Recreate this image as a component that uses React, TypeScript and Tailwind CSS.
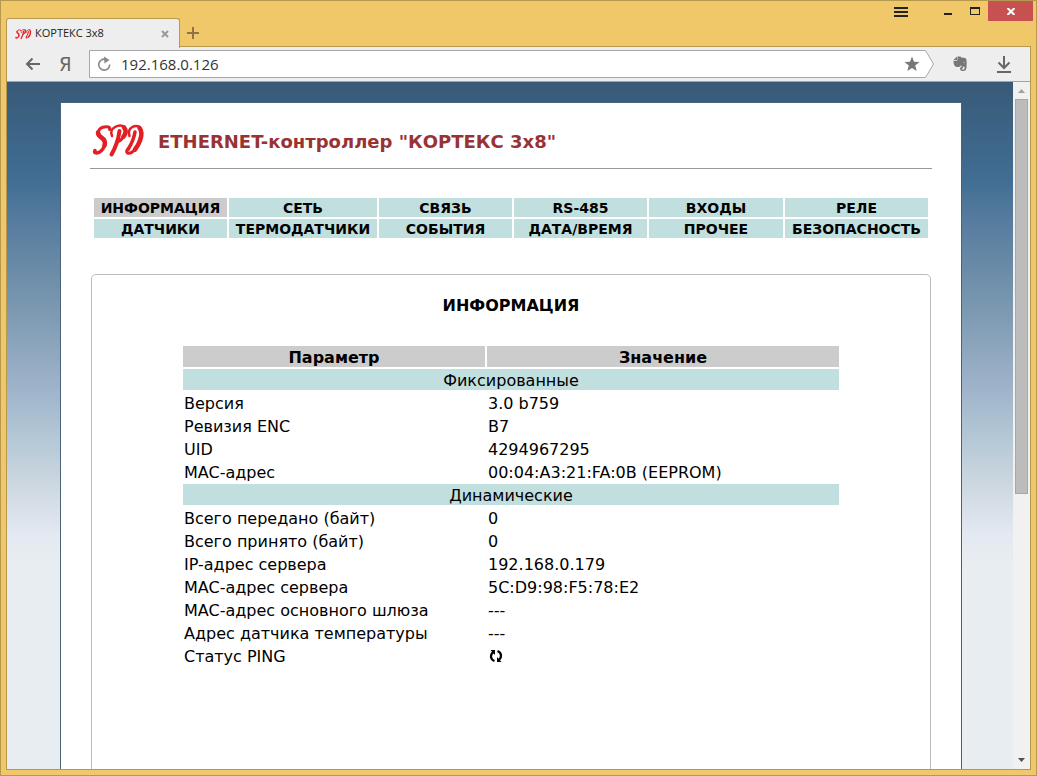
import type { ReactNode } from "react";

const menu = [
  ["ИНФОРМАЦИЯ", "СЕТЬ", "СВЯЗЬ", "RS-485", "ВХОДЫ", "РЕЛЕ"],
  ["ДАТЧИКИ", "ТЕРМОДАТЧИКИ", "СОБЫТИЯ", "ДАТА/ВРЕМЯ", "ПРОЧЕЕ", "БЕЗОПАСНОСТЬ"],
];

const fixedRows: [string, ReactNode][] = [
  ["Версия", "3.0 b759"],
  ["Ревизия ENC", "B7"],
  ["UID", "4294967295"],
  ["MAC-адрес", "00:04:A3:21:FA:0B (EEPROM)"],
];

const dynamicRows: [string, ReactNode][] = [
  ["Всего передано (байт)", "0"],
  ["Всего принято (байт)", "0"],
  ["IP-адрес сервера", "192.168.0.179"],
  ["MAC-адрес сервера", "5C:D9:98:F5:78:E2"],
  ["MAC-адрес основного шлюза", "---"],
  ["Адрес датчика температуры", "---"],
  ["Статус PING", <PingButton key="ping" />],
];

export default function App() {
  return (
    <div className="flex h-screen flex-col overflow-hidden border border-[#b6984f] bg-[#f0c869] px-[5px] pb-[5px]">
      <TitleBar />
      <div className="flex min-h-0 flex-1 flex-col border border-t-0 border-[#b6984f]">
        <Toolbar />
        <div className="flex min-h-0 flex-1">
          <div className="min-w-0 flex-1 overflow-hidden bg-[linear-gradient(#385a78,#406d92_14%,#557b9e_20%,#7896ae_32%,#9db2c9_44%,#b4c8d6_52%,#cbd6df_58%,#e4e9f2_66%,#e8edf1_70%)] pt-5 pr-[51px] pl-[53px]">
            <DevicePage />
          </div>
          <Scrollbar />
        </div>
      </div>
    </div>
  );
}

function TitleBar() {
  return (
    <header className="flex h-[46px] shrink-0">
      <div className="relative z-10 mt-[17px] -mb-px flex w-[174px] items-center rounded-t-[3px] border border-b-0 border-[#b6984f] bg-[#eeeeee] pr-2.5 pl-2">
        <SpdLogo className="h-3 w-[17px]" />
        <span className="ml-[3px] flex-1 font-['Open_Sans',sans-serif] text-[11px] text-[#222222]">
          КОРТЕКС 3x8
        </span>
        <button aria-label="Закрыть вкладку" type="button">
          <svg className="h-2 w-2" stroke="#999999" strokeWidth="2" viewBox="0 0 8 8">
            <path d="M1 1l6 6M7 1 1 7" />
          </svg>
        </button>
      </div>
      <div className="flex flex-1 justify-between border-b border-[#b6984f]">
        <button aria-label="Новая вкладка" className="mt-5 ml-[5px] h-6 w-4" type="button">
          <svg className="h-4 w-4" stroke="#8e7545" strokeWidth="2" viewBox="0 0 16 16">
            <path d="M8 2v12M2 8h12" />
          </svg>
        </button>
        <div className="-mr-0.5 flex h-5 items-start">
          <button aria-label="Меню" className="mt-1.5 mr-8 h-2.5 w-3.5" type="button">
            <svg className="h-2.5 w-3.5" fill="#222222" viewBox="0 0 14 10">
              <path d="M0 0h14v2H0zM0 4h14v2H0zM0 8h14v2H0z" />
            </svg>
          </button>
          <button aria-label="Свернуть" className="h-5 w-6" type="button">
            <svg className="h-5 w-6" fill="#222222" viewBox="0 0 24 20">
              <path d="M4 12h8v2H4z" />
            </svg>
          </button>
          <button aria-label="Развернуть" className="h-5 w-6" type="button">
            <svg className="h-5 w-6" fill="#222222" viewBox="0 0 24 20">
              <path d="M6 6h10v8H6zM7 8v5h8V8z" fillRule="evenodd" />
            </svg>
          </button>
          <button
            aria-label="Закрыть"
            className="flex h-5 w-[45px] items-center justify-center bg-[#c75050]"
            type="button"
          >
            <svg className="h-[7px] w-2" stroke="#ffffff" strokeWidth="2" viewBox="0 0 8 7">
              <path d="M.5 0l7 7M7.5 0l-7 7" />
            </svg>
          </button>
        </div>
      </div>
    </header>
  );
}

function Toolbar() {
  return (
    <div className="flex h-[35px] shrink-0 items-center border-b border-[#a2a2a2] bg-[#eeeeee] px-[18px] font-['Open_Sans',sans-serif] text-[#666666]">
      <button aria-label="Назад" type="button">
        <svg
          className="h-4 w-4"
          fill="none"
          stroke="currentColor"
          strokeWidth="2"
          viewBox="0 0 16 16"
        >
          <path d="M15 8H2M7.5 2.500 2 8l5.500 5.500" />
        </svg>
      </button>
      <button
        aria-label="Яндекс"
        className="mr-[18px] ml-[18px] w-3 font-['DejaVu_Sans_Condensed','DejaVu_Sans',sans-serif] text-xl leading-6"
        type="button"
      >
        Я
      </button>
      <form className="relative flex h-7 flex-1 items-center">
        <svg
          className="absolute inset-0 h-full w-full"
          preserveAspectRatio="none"
          viewBox="0 0 845 28"
        >
          <path
            d="M.5.5h836l8 13.500-8 13.500H.5z"
            fill="#ffffff"
            stroke="#a8a8a8"
            vectorEffect="non-scaling-stroke"
          />
        </svg>
        <button aria-label="Обновить" className="relative ml-[7px]" type="button">
          <svg
            className="h-4 w-4"
            fill="none"
            stroke="#888888"
            strokeWidth="1.600"
            viewBox="0 0 16 16"
          >
            <path d="M13.700 8.500A5.500 5.500 0 1 1 9.500 3.300" />
            <path d="M8 .5 13.500 4 8.500 7.500z" fill="#888888" stroke="none" />
          </svg>
        </button>
        <input
          aria-label="Адрес"
          className="relative ml-[9px] min-w-0 flex-1 bg-transparent text-[15px] text-[#333333] outline-none"
          defaultValue="192.168.0.126"
          type="text"
        />
        <button aria-label="В закладки" className="relative mr-[14px]" type="button">
          <svg className="h-4 w-4" fill="#777777" viewBox="0 0 16 16">
            <path d="M8 .5l2 5.300 5.500.2-4.300 3.500 1.500 5.500L8 11.900 3.300 15l1.500-5.500L.5 6 6 5.800z" />
          </svg>
        </button>
      </form>
      <button aria-label="Evernote" className="ml-[18px]" type="button">
        <svg className="h-4 w-4" fill="#777777" viewBox="0 0 16 16">
          <path d="M1.500 4 5 .5V4z" />
          <path d="M5.500.5H8q1 0 1.300 1l3.700.5q1.200.2 1.400 1.500.6 3.500.1 8-.4 3.500-3 3.500h-1q-2.500 0-2.500-2.300Q8 10.500 10.500 10.500h.5v1.700q-1.300-.1-1.300.7 0 .7 1 .7h.8q.9 0 1-1.200l.1-1.700-2.900-.3-.7-1.200q-.5 1.700-2.500 1.700H4.500Q2.300 10.700 1.700 7.300L1.400 4.800h3q1.100 0 1.100-1z" />
          <path d="M11 6.700q1.200-1.100 2 .3z" fill="#eeeeee" />
        </svg>
      </button>
      <button aria-label="Загрузки" className="ml-7" type="button">
        <svg
          className="h-[18px] w-4"
          fill="none"
          stroke="currentColor"
          strokeWidth="2"
          viewBox="0 0 16 18"
        >
          <path d="M8 1v12M2.500 7.500 8 13l5.500-5.500M1 17h14" />
        </svg>
      </button>
    </div>
  );
}

function DevicePage() {
  return (
    <main className="h-full border border-b-0 border-[#4a617a] bg-white px-[29px] font-['DejaVu_Sans',Verdana,sans-serif] text-black">
      <div className="flex h-[66px] items-end gap-3 border-b border-[#999999]">
        <SpdLogo className="mb-2.5 ml-0.5 h-9 w-[54px]" />
        <h1 className="mb-3 text-lg font-bold text-[#993333]">
          ETHERNET-контроллер &quot;КОРТЕКС 3x8&quot;
        </h1>
      </div>

      <nav className="mt-[27px] px-0.5">
        <table className="w-full table-fixed border-separate border-spacing-0.5 text-center text-sm leading-[18px] font-bold">
          <colgroup>
            <col className="w-[133px]" />
            <col className="w-[148px]" />
            <col className="w-[133px]" />
            <col className="w-[133px]" />
            <col className="w-[134px]" />
            <col />
          </colgroup>
          <tbody>
            {menu.map((row) => (
              <tr key={row[0]}>
                {row.map((item) => (
                  <td
                    className={
                      item === "ИНФОРМАЦИЯ" ? "bg-[#cccccc] p-0" : "bg-[#c0dfde] p-0"
                    }
                    key={item}
                  >
                    <a className="block pt-px" href="#">
                      {item}
                    </a>
                  </td>
                ))}
              </tr>
            ))}
          </tbody>
        </table>
      </nav>

      <section className="mx-px mt-[34px] min-h-[600px] rounded-[5px] border border-[#bbbbbb] px-[89px] pt-[21px]">
        <h2 className="text-center text-base leading-5 font-bold">ИНФОРМАЦИЯ</h2>
        <table className="mt-7 w-full table-fixed border-separate border-spacing-0.5 text-base leading-[19px]">
          <colgroup>
            <col className="w-[302px]" />
            <col />
          </colgroup>
          <thead>
            <tr className="bg-[#cccccc]">
              <th className="px-px pt-0.5 pb-0">Параметр</th>
              <th className="px-px pt-0.5 pb-0">Значение</th>
            </tr>
          </thead>
          <tbody>
            <GroupRow title="Фиксированные" />
            {fixedRows.map(([name, value]) => (
              <ValueRow key={name} name={name} value={value} />
            ))}
            <GroupRow title="Динамические" />
            {dynamicRows.map(([name, value]) => (
              <ValueRow key={name} name={name} value={value} />
            ))}
          </tbody>
        </table>
      </section>
    </main>
  );
}

function GroupRow({ title }: { title: string }) {
  return (
    <tr>
      <td className="bg-[#c0dfde] px-px pt-0.5 pb-0 text-center" colSpan={2}>
        {title}
      </td>
    </tr>
  );
}

function ValueRow({ name, value }: { name: string; value: ReactNode }) {
  return (
    <tr>
      <td className="px-px pt-0.5 pb-0">{name}</td>
      <td className="px-px pt-0.5 pb-0">{value}</td>
    </tr>
  );
}

function PingButton() {
  return (
    <button aria-label="Обновить PING" className="block h-[19px] w-4" type="button">
      <svg className="h-4 w-4" fill="none" stroke="#000000" strokeWidth="2.200" viewBox="0 0 16 16">
        <path d="M6.500 12Q3 10.500 3 7.500T5.500 3M9.500 2Q13 3.500 13 6.500T10.500 11" />
        <path d="M2.500 1H7v5zM13.500 13H9V8z" fill="#000000" stroke="none" />
      </svg>
    </button>
  );
}

function Scrollbar() {
  return (
    <div className="flex w-[17px] shrink-0 flex-col items-center bg-[#f1f1f1]">
      <svg className="h-[17px] w-[17px]" fill="#a0a0a0" viewBox="0 0 17 17">
        <path d="M8.500 7 12 11H5z" />
      </svg>
      <div className="h-[395px] w-[13px] border border-[#a8a8a8] bg-[#bcbcbc]" />
      <svg className="mt-auto h-[17px] w-[17px]" fill="#505050" viewBox="0 0 17 17">
        <path d="M5 6h7l-3.500 4z" />
      </svg>
    </div>
  );
}

// Brush-script emblem, also used as the tab icon
function SpdLogo({ className }: { className: string }) {
  return (
    <svg
      className={className}
      fill="none"
      stroke="#e31e24"
      strokeLinecap="round"
      strokeLinejoin="round"
      viewBox="0 0 54 36"
    >
      <path d="M17.500 7.500Q19 4.500 14 4.700 7 5 6 10.500" strokeWidth="3" />
      <path d="M6 10.500q0 3 4 5.500t2.500 7.500" strokeWidth="4.500" />
      <path d="M12.500 23.500Q10 30.500 4.500 31 1.500 31 3 28.500" strokeWidth="3.500" />
      <path d="M27.500 9Q26 21 19.500 32.500" strokeWidth="4" />
      <path d="M20 14Q17.500 8 23 5t9.500 0" strokeWidth="2.500" />
      <path d="M32 5.500q3.500 4-.5 9" strokeWidth="4.500" />
      <path d="M31.500 14.500Q28.500 19.500 26 19.500" strokeWidth="3" />
      <path d="M43 10q-1.500 9-7 17.500" strokeWidth="3.500" />
      <path d="M37.500 14Q35.500 8 40 5.300 44 3 47.500 5" strokeWidth="2.500" />
      <path d="M47.500 6Q51 10 48 18.500 46.500 23 43 27.500" strokeWidth="4.500" />
      <path d="M43 27.500Q39 32 35.500 31 33.500 29.500 36 27" strokeWidth="3" />
    </svg>
  );
}
